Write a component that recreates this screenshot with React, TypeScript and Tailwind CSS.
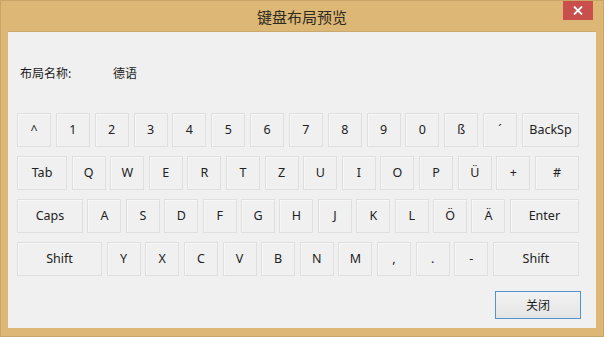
import React from "react";

type K = { l: string; w?: number };

const rows: K[][] = [
  [
    { l: "^" }, { l: "1" }, { l: "2" }, { l: "3" }, { l: "4" }, { l: "5" }, { l: "6" },
    { l: "7" }, { l: "8" }, { l: "9" }, { l: "0" }, { l: "ß" }, { l: "´" }, { l: "BackSp", w: 57 },
  ],
  [
    { l: "Tab", w: 50 }, { l: "Q" }, { l: "W" }, { l: "E" }, { l: "R" }, { l: "T" }, { l: "Z" },
    { l: "U" }, { l: "I" }, { l: "O" }, { l: "P" }, { l: "Ü" }, { l: "+" }, { l: "#", w: 44 },
  ],
  [
    { l: "Caps", w: 66 }, { l: "A" }, { l: "S" }, { l: "D" }, { l: "F" }, { l: "G" }, { l: "H" },
    { l: "J" }, { l: "K" }, { l: "L" }, { l: "Ö" }, { l: "Ä" }, { l: "Enter", w: 69 },
  ],
  [
    { l: "Shift", w: 85 }, { l: "Y" }, { l: "X" }, { l: "C" }, { l: "V" }, { l: "B" }, { l: "N" },
    { l: "M" }, { l: "," }, { l: "." }, { l: "-" }, { l: "Shift", w: 86 },
  ],
];

const font = { fontFamily: '"Noto Sans", "Noto Sans CJK SC", sans-serif' };

export default function App() {
  return (
    <div
      className="w-[604px] h-[337px] bg-[#dcb775] flex flex-col border border-[#c8a466] overflow-hidden"
      style={font}
    >
      <div className="relative h-[30px] flex items-center justify-center shrink-0">
        <span className="text-[15px] text-[#2e2a22] leading-none mt-[1px]" style={{ fontFamily: '"Noto Sans CJK SC", sans-serif' }}>
          键盘布局预览
        </span>
        <div className="absolute right-[10px] top-[-1px] w-[30px] h-[20px] bg-[#c84f4b] flex items-center justify-center">
          <svg width="10" height="9" viewBox="0 0 10 9">
            <path d="M1 0.5 L9 8.5 M9 0.5 L1 8.5" stroke="#ffffff" strokeWidth="1.8" />
          </svg>
        </div>
      </div>
      <div className="ml-[7px] mr-[7px] h-[297px] bg-[#f0f0f0] flex flex-col pl-[9px] pr-[15px] border-t border-[#c9a96e]">
        <div className="flex items-center h-[16px] mt-[33px] text-[12px] text-[#1a1a1a]" style={{ fontFamily: '"Noto Sans CJK SC", sans-serif' }}>
          <span className="ml-[3px] w-[93px]">布局名称:</span>
          <span>德语</span>
        </div>
        <div className="flex flex-col gap-[9px] mt-[32px] w-[562px]">
          {rows.map((row, i) => (
            <div key={i} className="flex justify-between h-[34px]">
              {row.map((k, j) => (
                <div
                  key={j}
                  className="h-[34px] flex items-center justify-center bg-[#f0f0f0] border border-[#dfdfdf] shadow-[inset_1px_1px_0_#f7f7f7] text-[12.5px] text-[#222222]"
                  style={{ width: k.w ?? 34 }}
                >
                  {k.l}
                </div>
              ))}
            </div>
          ))}
        </div>
        <div className="flex justify-end mt-[15px]">
          <div
            className="w-[86px] h-[28px] border border-[#4f93cf] bg-gradient-to-b from-[#f2f2f2] to-[#e4e4e4] flex items-center justify-center text-[12px] text-[#1a1a1a]"
            style={{ fontFamily: '"Noto Sans CJK SC", sans-serif' }}
          >
            关闭
          </div>
        </div>
      </div>
    </div>
  );
}
